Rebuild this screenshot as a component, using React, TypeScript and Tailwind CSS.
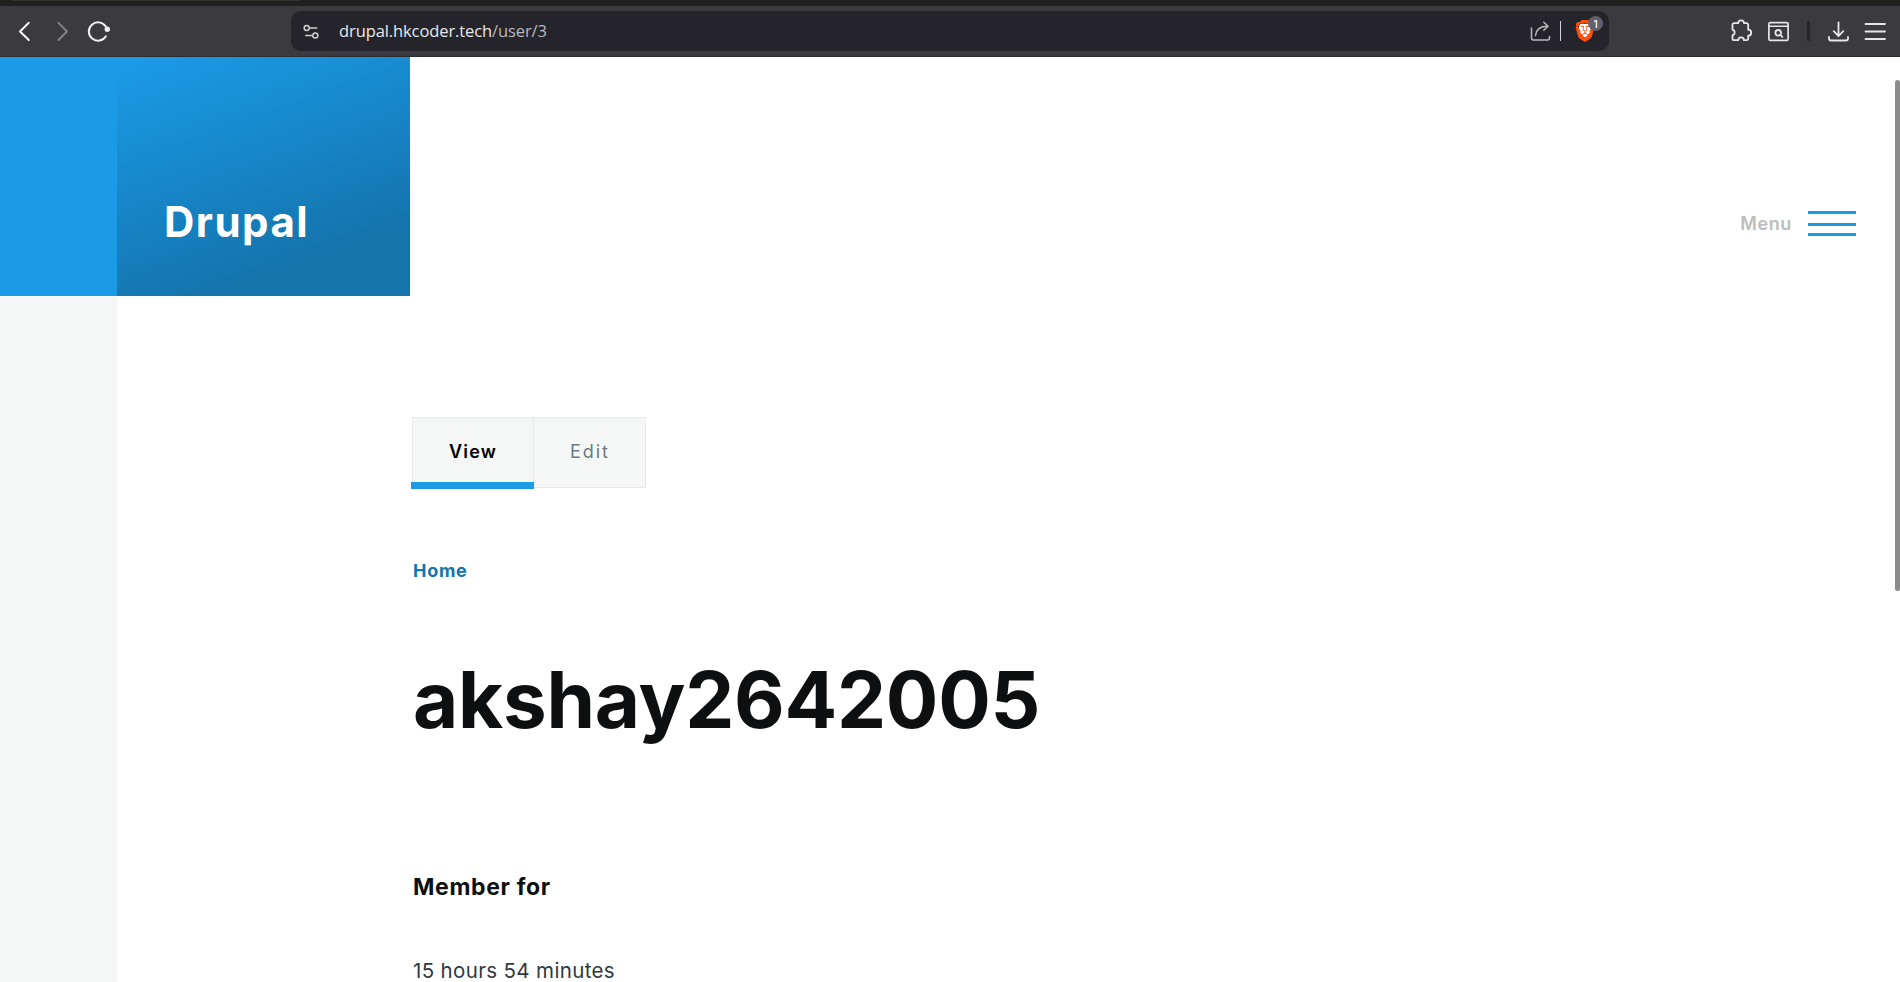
import type { ReactNode } from "react";
import { SiBrave } from "react-icons/si";

type IconProps = { className?: string; width: number; children: ReactNode };

function Icon({ className = "", width, children }: IconProps) {
  return (
    <svg
      className={`h-6 shrink-0 ${className}`}
      width={width}
      height={24}
      viewBox={`0 0 ${width} 24`}
      fill="none"
      stroke="currentColor"
      strokeWidth={1.8}
      strokeLinecap="round"
      strokeLinejoin="round"
    >
      {children}
    </svg>
  );
}

function BraveShield() {
  return (
    <div className="relative ml-[14px] h-6 w-[20px] shrink-0">
      <svg className="absolute inset-0" width="20" height="24" viewBox="0 0 20 24">
        <path d="M5 5h10l1.500 4-2 6-4.500 4-4.500-4-2-6z" fill="#fff" />
      </svg>
      <SiBrave className="absolute -left-[1px] top-[1px] h-[22px] w-[22px] text-[#fb4f0b]" />
      <span className="absolute -top-[3px] left-[13px] flex h-[15px] w-[15px] items-center justify-center rounded-full bg-[#5f6070] text-[10px] font-medium leading-none text-white">
        1
      </span>
    </div>
  );
}

function BrowserBar() {
  return (
    <div className="h-[57px] shrink-0 border-b border-[#2d2c30] bg-[#3b3a3f]">
      <div className="h-[6px] bg-[#202020] pl-3">
        <div className="h-px w-[288px] bg-[#333333]" />
      </div>
      <div className="flex h-[50px] items-center text-[#e6e6e8]">
        <Icon className="ml-3 text-white" width={24}>
          <path d="M16.800 3.800 8 12.500l8.800 8.500" strokeWidth={1.900} />
        </Icon>
        <Icon className="ml-[14px] text-[#85848a]" width={24}>
          <path d="m8.500 3.800 8.500 8.700-8.500 8.500" strokeWidth={1.900} />
        </Icon>
        <Icon className="ml-[13px] text-[#f0f0f2]" width={24}>
          <path d="M18.700 7.400A9.200 9.200 0 1 0 18.900 17.300" strokeWidth={2} />
          <circle cx="20.300" cy="10.200" r="2.700" fill="currentColor" stroke="none" />
        </Icon>

        <div className="ml-[180px] flex h-10 w-[1318px] shrink-0 items-center rounded-[10px] bg-[#25242a]">
          <Icon className="ml-[10px] text-[#cfcfd2]" width={20}>
            <circle cx="5.700" cy="9" r="2.500" strokeWidth={1.500} />
            <path d="M9.200 9h6.500M4.700 16.600h6" strokeWidth={1.500} />
            <circle cx="14.300" cy="16.600" r="2.500" strokeWidth={1.500} />
          </Icon>
          <span className="ml-[18px] whitespace-nowrap font-['Open_Sans',sans-serif] text-[16.5px] leading-6 tracking-[-0.1px] text-[#e9e9ec]">
            drupal.hkcoder.tech<span className="text-[#b9b9be]">/user/3</span>
          </span>
          <Icon className="ml-auto text-[#b9b9bd]" width={24}>
            <path
              d="M1.500 9v10a2 2 0 0 0 2 2h14a2 2 0 0 0 2-2v-1.500M5.500 16.500C6 11.500 9.500 7.200 17.500 7.200M13.800 3.200l4.200 4-4.200 4"
              strokeWidth={1.500}
            />
          </Icon>
          <div className="ml-[6px] h-5 w-px shrink-0 bg-[#d2d2d4]" />
          <BraveShield />
          <div className="w-[14px] shrink-0" />
        </div>

        <Icon className="ml-[121px]" width={24}>
          <path d="M4 4.200h4.200a2.900 2.900 0 0 1 5.800 0h2.500a1.700 1.700 0 0 1 1.700 1.700v4.800a3 3 0 0 1 0 6v3a1.500 1.500 0 0 1-1.500 1.500h-2.800a2.800 2.800 0 0 0-5.600 0H4a1.500 1.500 0 0 1-1.500-1.500v-3.400a2.900 2.900 0 0 0 0-5.600V5.700A1.500 1.500 0 0 1 4 4.200z" />
        </Icon>
        <Icon className="ml-[13px]" width={24}>
          <rect x="1.900" y="3.600" width="19.200" height="17.800" rx="1.500" strokeWidth={1.700} />
          <path d="M2 7.300h19" strokeWidth={1.500} />
          <circle cx="11.200" cy="13.800" r="2.800" />
          <path d="m13.400 15.800 2 2" />
        </Icon>
        <div className="ml-4 h-5 w-[3px] shrink-0 rounded-full bg-[#25242a]" />
        <Icon className="ml-[17px]" width={24}>
          <path d="M11.500 3.300v13.500m-4.800-4.600 4.800 4.800 4.800-4.800M2 18v1.500a2 2 0 0 0 2 2h15a2 2 0 0 0 2-2V18" />
        </Icon>
        <Icon className="ml-[12px]" width={24}>
          <path d="M2.500 5H22M2.500 12.500H22M2.500 20H22" />
        </Icon>
      </div>
    </div>
  );
}

function SiteHeader() {
  return (
    <header className="flex h-[239px] shrink-0">
      <div className="w-[117px] shrink-0 bg-[#1b9ae6]" />
      <div className="w-[293px] shrink-0 bg-[linear-gradient(160deg,#1b9ae6_3%,#1785c7_45%,#1474ac_79%)] pl-[47px] pt-[140px]">
        <span className="block text-[42px] font-bold leading-[49px] tracking-[1.5px] text-white">
          Drupal
        </span>
      </div>
      <button className="ml-auto mr-[44px] mt-[154px] flex h-[25px] items-center">
        <span className="text-[18px] font-semibold tracking-[0.600px] text-[#bdbdbd]">Menu</span>
        <span className="ml-[16px] flex h-[25px] w-12 flex-col">
          <span className="h-[3px] bg-[#1b9ae6]" />
          <span className="mt-[9px] h-[3px] bg-[#1b9ae6]" />
          <span className="mt-[7px] h-[3px] bg-[#1b9ae6]" />
        </span>
      </button>
    </header>
  );
}

function Tabs() {
  return (
    <nav className="-ml-px flex h-[72px] items-start text-[18px]">
      <a className="flex h-[72px] w-[123px] flex-col">
        <span className="ml-px flex h-[65px] items-center justify-center border-l border-r border-t border-[#e7eaea] bg-[#f5f7f7] pt-[3px] font-semibold tracking-[1.200px] text-black">
          View
        </span>
        <span className="h-[7px] bg-[#1b9ae6]" />
      </a>
      <a className="flex h-[71px] w-[112px] items-center border-b border-r border-t border-[#e7eaea] bg-[#f5f7f7] pb-[2px] pl-[36px] tracking-[1.900px] text-[#6b7b82]">
        Edit
      </a>
    </nav>
  );
}

export default function App() {
  return (
    <div className="flex h-[982px] w-full flex-col overflow-hidden bg-white font-['Inter',sans-serif]">
      <BrowserBar />
      <div className="relative flex min-h-0 flex-1 flex-col">
        <SiteHeader />
        <div className="flex min-h-0 flex-1 pt-px">
          <aside className="w-[117px] shrink-0 bg-[#f5f7f7]" />
          <main className="ml-[295px] pt-[120px]">
            <Tabs />
            <a className="mt-[72px] block pl-px text-[18px] font-bold leading-5 tracking-[0.7px] text-[#1474ac]">
              Home
            </a>
            <h1 className="mt-[79px] pl-px text-[78px] font-bold leading-[80px] tracking-[-0.25px] text-[#0d0f10]">
              akshay2642005
            </h1>
            <h2 className="mt-[132px] pl-px text-[23px] font-bold leading-[30px] tracking-[0.650px] text-[#0d0f10]">
              Member for
            </h2>
            <p className="mt-[54px] whitespace-nowrap pl-px text-[20.5px] leading-[30px] tracking-[0.350px] text-[#2f3a40]">
              15 hours 54 minutes
            </p>
          </main>
        </div>
        <div className="absolute right-0 top-[23px] h-[511px] w-[5px] rounded-full bg-[#8b8b8b]" />
      </div>
    </div>
  );
}
